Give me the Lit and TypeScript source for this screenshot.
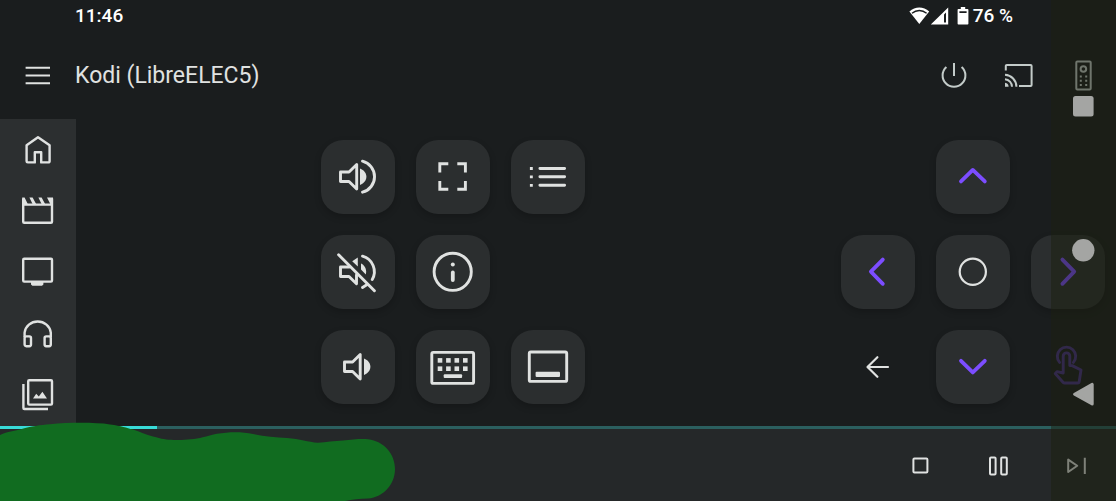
import { LitElement, html, css, svg } from "lit";
import { customElement } from "lit/decorators.js";

interface Item {
  label: string;
  icon: unknown;
  kind?: string;
}

const speaker = svg`<path d="M19.5 32H28L35.7 24.5V49L28 41.5H19.5Z"/>`;

const sections: Item[] = [
  {
    label: "Home",
    icon: svg`<path d="M4.6 11.3 16 3.2 27.6 11.3V27.2a1.2 1.2 0 0 1-1.2 1.2H19.2V18.2H12.8V28.4H5.8a1.2 1.2 0 0 1-1.2-1.2Z"/>`,
  },
  {
    label: "Movies",
    icon: svg`<path d="M1.2 3.4V26.8a1 1 0 0 0 1 1H29a1 1 0 0 0 1-1V3.4M1.2 9.6H30"/><path class="fill" d="M.2 2.6 2.6 2.6 6 9.5H.4ZM7.4 2.6H10.6L14.4 9.4H10.8ZM16.4 2.6H19.6L23.4 9.4H19.8ZM25 2.6H31V10H28.8Z"/>`,
  },
  {
    label: "TV shows",
    icon: svg`<rect x="1.2" y="2.8" width="28.8" height="22.8" rx="1"/><path class="fill" d="M9 25.8H21.4V28.4L20 29.8H10.4L9 28.4Z"/>`,
  },
  {
    label: "Music",
    icon: svg`<path d="M2.6 20V15.6a13.2 12.7 0 0 1 26.2 0V20"/><rect x="2.6" y="19.4" width="6.4" height="9.8" rx="1.6"/><rect x="22.6" y="19.4" width="6.2" height="9.8" rx="1.6"/>`,
  },
  {
    label: "Pictures",
    icon: svg`<rect x="6.2" y="2.2" width="23.8" height="24.4" rx="1"/><path d="M1.4 6V30a1 1 0 0 0 1 1H26"/><path class="fill" d="M11 20.6 14.2 15.8 16.8 18.6 20.4 13.8 25 20.6Z"/>`,
  },
];

const actions: (Item | null)[] = [
  {
    label: "Volume up",
    icon: svg`${speaker}<path class="fill" d="M39 28.5C43 30 45.4 33.3 45.4 36.8S43 43.5 39 45Z"/><path d="M41.5 21.2A16 16 0 0 1 41.5 52.2"/>`,
  },
  {
    label: "Fullscreen",
    icon: svg`<path stroke-linecap="butt" stroke-linejoin="miter" d="M23.8 32.5V23.8H32.3M41.3 23.8H49.4V32.5M49.4 41V49.2H41.3M32.3 49.2H23.8V41"/>`,
  },
  {
    label: "List",
    icon: svg`<path d="M28.9 28.5H53.6M28.9 36.8H53.6M28.9 45.3H53.6"/><path class="fill" d="M18.9 27.1h2.9v2.9h-2.9ZM18.9 35.4h2.9v2.9h-2.9ZM18.9 43.9h2.9v2.9h-2.9Z"/>`,
  },
  {
    label: "Mute",
    icon: svg`<path d="M17.6 19.8 53.4 55.8"/><path d="M28.5 32H19.5V41.5H28L35.5 48.8V40"/><path class="fill" d="M31.2 26.3 36.8 22.5V31.6ZM40 28.5C43 29.8 45.2 33 45.2 36.8L44.8 39.4 40 34.6Z"/><path d="M41.5 21.2A16 16 0 0 1 51.2 44.6M41.5 52.4 45.8 49.8"/>`,
  },
  {
    label: "Information",
    icon: svg`<circle cx="36.7" cy="36.8" r="18.6"/><path d="M36.8 37.4V45" class="stem"/><circle class="fill" cx="36.8" cy="29.5" r="2"/>`,
  },
  null,
  {
    label: "Volume down",
    icon: svg`<path d="M23.5 32H31.6L39.2 24.5V49L31.6 41.5H23.5Z"/><path class="fill" d="M43 28.5C47 30 49.4 33.3 49.4 36.8S47 43.5 43 45Z"/>`,
  },
  {
    label: "Keyboard",
    icon: svg`<rect x="15.8" y="22.4" width="41.8" height="31" rx="1.5"/>${[24, 32.4, 40.8, 49.3].map((x) =>
      [30.4, 38.7].map((y) => svg`<rect class="fill" x=${x - 2.3} y=${y - 2.3} width="4.6" height="4.6"/>`)
    )}<rect class="fill" x="27.7" y="44.2" width="18.4" height="3.8" rx="1"/>`,
  },
  {
    label: "Player controls",
    icon: svg`<rect x="18.3" y="22" width="37.4" height="29.4" rx="1.5"/><rect class="fill" x="24.6" y="41.7" width="24.4" height="5.3" rx="1"/>`,
  },
];

const pad: (Item | null)[] = [
  null,
  { label: "Up", kind: "accent", icon: svg`<path d="M25 41.4 36.8 29.9 48.8 41.4"/>` },
  null,
  { label: "Left", kind: "accent", icon: svg`<path d="M41.8 24.6 29.9 36.7 41.8 48.8"/>` },
  { label: "Select", kind: "fine", icon: svg`<circle cx="36.8" cy="36.8" r="13.1"/>` },
  { label: "Right", kind: "accent", icon: svg`<path d="M31.4 24.6 43.2 36.7 31.4 48.8"/>` },
  { label: "Back", kind: "bare fine", icon: svg`<path d="M47 37H27M36.4 27.2 26.5 37 36.4 46.8"/>` },
  { label: "Down", kind: "accent", icon: svg`<path d="M25 30.8 36.8 42.4 48.8 30.8"/>` },
  {
    label: "Touch pad",
    kind: "bare faint",
    icon: svg`<path d="M28.6 32.4A9.2 9.2 0 1 1 42.4 32.4"/><path d="M32.2 43V26.2a3.3 3.3 0 0 1 6.6 0V35.6H41.2L50 40 48.2 51.6a1.6 1.6 0 0 1-1.6 1.4H33.6a2 2 0 0 1-1.4-.6L24.2 43.6 26 41.6Z"/>`,
  },
];

const transport: Item[] = [
  { label: "Stop", icon: svg`<rect x="4.4" y="5.6" width="14" height="14" rx="1"/>` },
  { label: "Pause", icon: svg`<rect x="3" y="4.4" width="5.6" height="17" rx="1"/><rect x="14.2" y="4.4" width="5.6" height="17" rx="1"/>` },
  { label: "Next", icon: svg`<path d="M3.2 6.6V19L12.2 12.8ZM19.8 4.8V21"/>` },
];

@customElement("app-root")
export class AppRoot extends LitElement {
  static styles = css`
    :host {
      display: flex;
      flex-direction: column;
      position: relative;
      min-height: 100vh;
      overflow: hidden;
      background: #1a1d1e;
      color: #e0e2e1;
      font-family: Roboto, "Noto Sans", sans-serif;
    }
    button {
      display: flex;
      align-items: center;
      justify-content: center;
      margin: 0;
      padding: 0;
      border: 0;
      background: none;
      color: inherit;
      font: inherit;
      cursor: pointer;
    }
    svg {
      display: block;
      flex: none;
      overflow: visible;
      fill: none;
      stroke: currentColor;
      stroke-width: 2;
      stroke-linejoin: round;
    }
    .fill {
      fill: currentColor;
      stroke: none;
    }
    .status {
      display: flex;
      align-items: center;
      height: 32px;
      padding: 0 103px 0 75px;
      color: #fff;
      font-size: 19px;
      font-weight: 500;
      line-height: 32px;
    }
    .clock {
      flex: 1;
    }
    .level {
      margin-left: 3px;
    }
    .appbar {
      display: flex;
      align-items: center;
      height: 87px;
    }
    .menu {
      width: 75px;
      height: 64px;
    }
    .title {
      flex: 1;
      margin: 0;
      font-size: 23px;
      font-weight: 400;
      line-height: 33px;
    }
    .tool {
      width: 65px;
      height: 64px;
      color: #c3cbc9;
    }
    .content {
      display: flex;
      flex: 1;
    }
    .side {
      display: flex;
      flex-direction: column;
      width: 76px;
      background: #2c2f30;
    }
    .section {
      height: 61px;
    }
    .section svg {
      stroke-width: 2.4;
    }
    .remote {
      display: flex;
      flex: 1;
      align-items: flex-start;
      justify-content: space-between;
      padding: 21px 11px 21px 245px;
    }
    .keys {
      display: grid;
      grid-template-columns: repeat(3, 74px);
      gap: 21px;
    }
    .key {
      width: 74px;
      height: 74px;
      border-radius: 22px;
      background: #2b2e2f;
      box-shadow: 0 3px 7px rgba(0, 0, 0, 0.2);
    }
    .key svg {
      stroke-width: 2.9;
      stroke-linecap: round;
    }
    .stem {
      stroke-width: 3.8;
    }
    .accent {
      color: #7c4dff;
    }
    .accent svg {
      stroke-width: 3.8;
    }
    .fine svg {
      stroke-width: 2.2;
    }
    .bare {
      background: none;
      box-shadow: none;
    }
    .faint {
      color: #473184;
    }
    .progress {
      display: block;
      width: 100%;
      height: 3px;
      border: 0;
      appearance: none;
      background: #2b5f5f;
    }
    .progress::-webkit-progress-bar {
      background: #2b5f5f;
    }
    .progress::-webkit-progress-value {
      background: #38dbd8;
    }
    .player {
      display: flex;
      position: relative;
      align-items: center;
      justify-content: flex-end;
      height: 72px;
      background: #252829;
    }
    .transport {
      width: 78px;
      height: 72px;
    }
    .scribble {
      position: absolute;
      bottom: 0;
      left: 0;
      fill: #116c20;
      stroke: none;
    }
    .system {
      display: flex;
      position: absolute;
      top: 0;
      right: 0;
      bottom: 0;
      flex-direction: column;
      align-items: center;
      justify-content: center;
      gap: 120px;
      width: 65px;
      background: rgba(27, 31, 16, 0.5);
      color: #a4a5a3;
    }
  `;

  private key(item: Item | null) {
    if (!item) return html`<span></span>`;
    return html`<button class="key ${item.kind ?? ""}" aria-label=${item.label}>
      <svg width="74" height="74" viewBox="0 0 74 74">${item.icon}</svg>
    </button>`;
  }

  render() {
    return html`
      <div class="status">
        <span class="clock">11:46</span>
        <svg width="62" height="18" viewBox="0 0 62 18">
          <path class="fill" d="M1.4 4.6C7.2-1 15.4-1 21.2 4.6L11.3 17Z" />
          <path d="M4 6.2C8.4 2.5 14.2 2.5 18.6 6.2" stroke="#1a1d1e" stroke-width="1.4" />
          <path class="fill" fill-rule="evenodd" d="M22.8 17.4 40.2 .6V17.4ZM36 7.4V15.6H38V5.4Z" />
          <path class="fill" fill-rule="evenodd" d="M52.8 0H57.2V2H59.6a.8.8 0 0 1 .8.8V16.8a.8.8 0 0 1-.8.8H50.4a.8.8 0 0 1-.8-.8V2.8A.8.8 0 0 1 50.4 2H52.8ZM51.4 4.2V6H58.6V4.2Z" />
        </svg>
        <span class="level">76 %</span>
      </div>

      <header class="appbar">
        <button class="menu" aria-label="Menu">
          <svg width="24" height="24" viewBox="0 0 24 24"><path d="M-.4 3.8H24M-.4 11.5H24M-.4 19.2H24" /></svg>
        </button>
        <h1 class="title">Kodi (LibreELEC5)</h1>
        <button class="tool" aria-label="Power">
          <svg width="28" height="28" viewBox="0 0 28 28"><path d="M14 .9V14.1M6.4 4.9A11.4 11.4 0 1 0 21.6 4.9" /></svg>
        </button>
        <button class="tool" aria-label="Cast">
          <svg width="28" height="28" viewBox="0 0 28 28">
            <path d="M.8 8.4V4a1 1 0 0 1 1-1H25.6a1 1 0 0 1 1 1V23a1 1 0 0 1-1 1H14" />
            <path d="M0 12.8A12 12 0 0 1 11.4 24.8M0 17.2A7.6 7.6 0 0 1 7 24.8" />
            <path class="fill" d="M0 20.8A4 4 0 0 1 3.6 24.8H0Z" />
          </svg>
        </button>
        <button class="tool" aria-label="Remote">
          <svg width="16" height="30" viewBox="0 0 16 30">
            <rect x=".3" y=".4" width="14.4" height="28" rx="1" />
            <circle cx="7.4" cy="8" r="2.8" />
            <path class="fill" d="M3.8 14.4h2v2h-2ZM9.2 14.4h2v2h-2ZM3.8 18.8h2v2h-2ZM9.2 18.8h2v2h-2ZM3.8 23h2v2h-2ZM9.2 23h2v2h-2Z" />
          </svg>
        </button>
      </header>

      <div class="content">
        <nav class="side" aria-label="Library">
          ${sections.map(
            (s) => html`<button class="section" aria-label=${s.label}>
              <svg width="32" height="31" viewBox="0 0 32 31">${s.icon}</svg>
            </button>`
          )}
        </nav>
        <main class="remote">
          <div class="keys">${actions.map((a) => this.key(a))}</div>
          <div class="keys">${pad.map((p) => this.key(p))}</div>
        </main>
      </div>

      <progress class="progress" max="1116" value="157" aria-label="Playback position"></progress>
      <footer class="player">
        <svg class="scribble" width="396" height="79" viewBox="0 0 396 79">
          <path
            d="M0 13C8 9 14 9 20 7.4C32 4 40 3 50 2.2C70 .4 95 .4 110 2.4C122 4 126 5.6 133 7.6C140 10 146 12.6 153 14.6C162 17 166 18 174 18C184 18 192 17.4 200 16C208 14.2 210 13 217 11.8C229 9.8 242 9.6 253 12C264 14.6 276 15.2 287 16C300 17 308 20 318 20.8C326 20.2 334 19 343 18.6C352 17.4 360 16.8 368 17.2C384 19 395 32 395 47S384 75 368 76.6C360 77 352 77.4 345 79H0Z"
          />
        </svg>
        ${transport.map(
          (t) => html`<button class="transport" aria-label=${t.label}>
            <svg width="24" height="24" viewBox="0 0 24 24">${t.icon}</svg>
          </button>`
        )}
      </footer>

      <div class="system">
        <button aria-label="Recent apps">
          <svg width="24" height="24" viewBox="0 0 24 24"><rect class="fill" x="1" y="1" width="20.6" height="20.6" rx="2.5" /></svg>
        </button>
        <button aria-label="Home screen">
          <svg width="24" height="24" viewBox="0 0 24 24"><circle class="fill" cx="11.3" cy="11.3" r="11.2" /></svg>
        </button>
        <button aria-label="System back">
          <svg width="24" height="24" viewBox="0 0 24 24"><path fill="currentColor" stroke-width="3" d="M2.6 11.2 20.2 1.4V21Z" /></svg>
        </button>
      </div>
    `;
  }
}
